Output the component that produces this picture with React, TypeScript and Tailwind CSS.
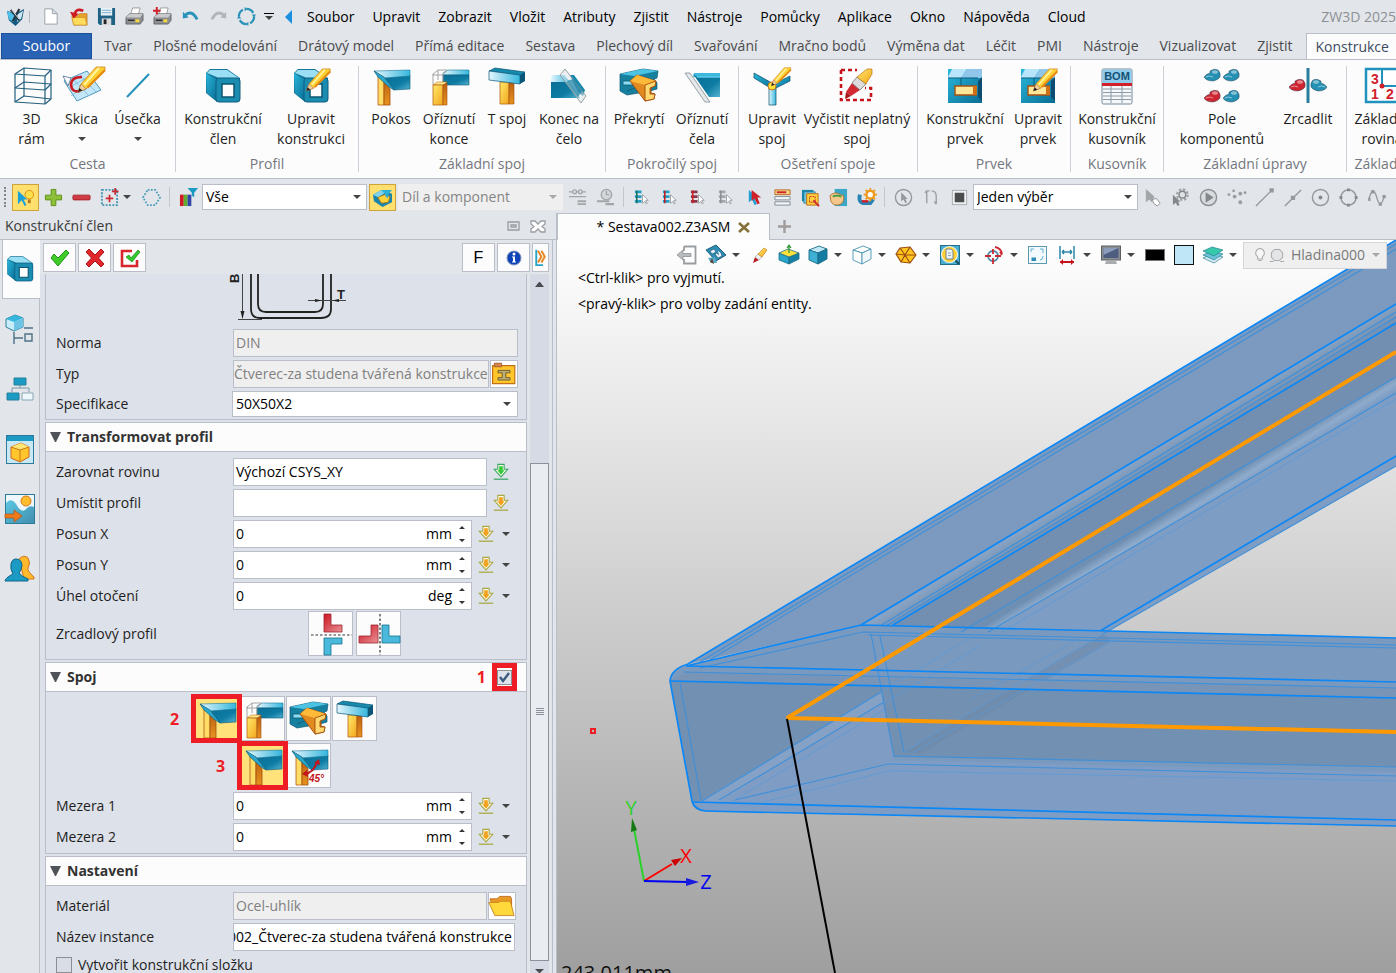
import React from 'react';

const FONT = "font-['Open_Sans','Noto_Sans',sans-serif]";

/* ---------- shared gradients ---------- */

function Gradients() {
    return (
        <svg width="0" height="0" className="absolute" aria-hidden="true">
            <defs>
                <linearGradient id="cyan" x1="0" y1="0" x2="1" y2="1">
                    <stop offset="0" stopColor="#2ab7dc" />
                    <stop offset="1" stopColor="#086c94" />
                </linearGradient>
                <linearGradient id="deep" x1="0" y1="0" x2="1" y2="1">
                    <stop offset="0" stopColor="#0b6f96" />
                    <stop offset="0.6" stopColor="#0d7ba3" />
                    <stop offset="1" stopColor="#55b3d0" />
                </linearGradient>
                <linearGradient id="pale" x1="0" y1="0" x2="1" y2="0">
                    <stop offset="0" stopColor="#e4f6fd" />
                    <stop offset="1" stopColor="#35b6dd" />
                </linearGradient>
                <linearGradient id="gold" x1="0" y1="0" x2="1" y2="1">
                    <stop offset="0" stopColor="#ffe96a" />
                    <stop offset="1" stopColor="#f3a51c" />
                </linearGradient>
                <linearGradient id="rust" x1="0" y1="0" x2="0" y2="1">
                    <stop offset="0" stopColor="#b95f12" />
                    <stop offset="1" stopColor="#e8921f" />
                </linearGradient>
                <linearGradient id="red" x1="0" y1="0" x2="1" y2="1">
                    <stop offset="0" stopColor="#cb1620" />
                    <stop offset="1" stopColor="#e99197" />
                </linearGradient>
            </defs>
        </svg>
    );
}

type IconProps = { name: string; size?: number };

/* ---------- large icons, 40 x 40 ---------- */

const pencil = (
    <g>
        <path d="M13 26 16 18 31 1 40 1 40 4 21 23Z" fill="#ffd034" stroke="#c9761a" strokeWidth="0.7" />
        <path d="M19 19 34 2" stroke="#fff3a0" strokeWidth="2" />
        <path d="M22.500 21.500 40 4" stroke="#e58b12" strokeWidth="2.400" />
        <path d="M13 26 16 18 21 23Z" fill="#f2cfa2" stroke="#9a6a3b" strokeWidth="0.6" />
        <path d="M13 26 14.300 22 17.500 24.600Z" fill="#222" />
    </g>
);

const tube = (
    <g>
        <path d="M3 7 7 3 24 3 37 12 37 33 34 36 14 36 3 27Z" fill="#15769a" />
        <path d="M4 7 7 4 24 4 36 12 16 12Z" fill="#9adff3" />
        <path d="M3 7 14 14 14 35 4 27Z" fill="url(#cyan)" />
        <path d="M16 12h18q3 0 3 3v18q0 3-3 3H16q-3 0-3-3V15q0-3 3-3Z" fill="#1a8cb0" stroke="#0e5f80" />
        <path d="M19 18h12v13H19Z" fill="#fcfcfc" stroke="#0b5573" strokeWidth="1.5" />
    </g>
);

const mitre = (
    <g>
        <path d="M7 10 13 12 13 39 7 39Z" fill="#ffdc66" stroke="#b25c12" strokeWidth="0.8" />
        <path d="M13 13 19 23 19 39 13 39Z" fill="url(#rust)" stroke="#a04e0e" strokeWidth="0.8" />
        <path d="M13 11 39 9 39 23 23 24Z" fill="url(#deep)" stroke="#0c5877" strokeWidth="0.6" />
        <path d="M3 5 39 4 39 10 13 12Z" fill="url(#pale)" stroke="#1b7897" strokeWidth="0.6" />
        <path d="M3 5 13 11 23 24 18 21 7 11Z" fill="#2ba6cb" stroke="#0c5877" strokeWidth="0.6" />
    </g>
);

const feature = (
    <g>
        <path d="M3 3H37V37H3Z" fill="url(#cyan)" />
        <path d="M3 11 7 3H22L16 12H3Z" fill="#b9e5fa" />
        <path d="M16 12 22 3H37V12Z" fill="#8fc6ea" />
        <path d="M33 15 37 11V35L33 31Z" fill="#0d4c71" />
        <path d="M16 12V19M3 12H33" stroke="#0b5c7c" />
        <path d="M10 20H31V29H10Z" fill="#ffe79a" stroke="#a4500f" strokeWidth="1.4" />
        <path d="M28 20H32V29H28Z" fill="#d06f14" />
    </g>
);

const clamp = (x: number, y: number, fill: string) => (
    <g key={x + '-' + y} transform={`translate(${x} ${y})`}>
        <path d="M0 8Q2 5 6 4L6 2Q10-1 14 1Q17 4 16 8Q14 11 9 12Q2 12 0 8Z" fill={fill} stroke="#394b59" strokeWidth="0.5" />
        <ellipse cx="11" cy="3" rx="3" ry="1.8" fill="#fff" opacity="0.45" />
        <path d="M2 8Q5 6 9 8" stroke="#fff" opacity="0.5" fill="none" />
    </g>
);

const large: Record<string, React.ReactNode> = {
    frame: (
        <g fill="none" stroke="#24607f" strokeWidth="1.2" strokeLinejoin="round">
            <path d="M3 8 12 2 39 4 33 10ZM3 22 12 16 39 18 33 24ZM3 36 12 30 39 33 33 38Z" />
            <path d="M3 8V36M12 2V30M39 4V33M33 10V38" />
        </g>
    ),
    sketch: (
        <g>
            <path d="M2 15 25 5 39 24 15 35Z" fill="#c3e7f8" stroke="#5199bc" />
            <path d="M9 30 32 14M6 22 28 10M9 11 27 30M17 8 34 26" stroke="#75b8d9" strokeWidth="0.8" />
            <path d="M1 10 9 12 6 20Z" fill="#fff" stroke="#47708f" strokeWidth="0.8" />
            <path d="M20 11Q9 11 9 19Q10 27 18 25" fill="none" stroke="#ca1c24" strokeWidth="2.6" />
            <g transform="translate(3 0)">{pencil}</g>
        </g>
    ),
    segment: <path d="M9 31 31 8" stroke="#2392bb" strokeWidth="2" />,
    tube,
    tubeEdit: (
        <g>
            {tube}
            <g transform="translate(4 2) scale(.88)">{pencil}</g>
        </g>
    ),
    mitre,
    mitre45: (
        <g>
            {mitre}
            <path d="M15 28Q25 27 28 16" fill="none" stroke="#c4151c" strokeWidth="2" />
            <path d="M25 17 30 13 31 19ZM18 24 13 28 19 31Z" fill="#c4151c" />
            <text x="20" y="36" fontSize="10" fontWeight="700" fontStyle="italic" fill="#c4151c" fontFamily="Liberation Sans, sans-serif">45°</text>
        </g>
    ),
    trimEnd: (
        <g>
            <path d="M14 7 19 4H40V9H14Z" fill="url(#pale)" stroke="#1b7897" strokeWidth="0.6" />
            <path d="M14 9H40V19H14Z" fill="url(#deep)" stroke="#0c5877" strokeWidth="0.6" />
            <path d="M4 8 9 4H18L14 9H4ZM4 8V19M14 8V17M9 4V14" fill="none" stroke="#9a9a9a" strokeWidth="0.9" />
            <path d="M4 19 8 16H18L15 19Z" fill="#ffe88e" stroke="#c3731a" strokeWidth="0.6" />
            <path d="M4 19H14V39H4Z" fill="url(#gold)" stroke="#b9661a" strokeWidth="0.8" />
            <path d="M14 19 18 17V39H14Z" fill="url(#rust)" stroke="#a04e0e" strokeWidth="0.6" />
        </g>
    ),
    tee: (
        <g>
            <path d="M13 16H22V38H13Z" fill="url(#gold)" stroke="#b9661a" strokeWidth="0.8" />
            <path d="M22 16H27V38H22Z" fill="url(#rust)" stroke="#a04e0e" strokeWidth="0.6" />
            <path d="M2 5 8 2 38 6 33 10Z" fill="#1689ac" stroke="#0c5877" strokeWidth="0.7" />
            <path d="M2 5 33 9V18L2 14Z" fill="url(#pale)" stroke="#0c5877" strokeWidth="0.7" />
            <path d="M33 9 38 6V15L33 18Z" fill="#0b5677" />
        </g>
    ),
    endFace: (
        <g>
            <path d="M2 16V11L4 9H15L21 16Z" fill="url(#pale)" />
            <path d="M2 16H19L31 32H2Z" fill="url(#deep)" />
            <path d="M21 9H25L36 24 34 30 29 26Z" fill="#1689ac" />
            <path d="M11 9 16 3 37 30 32 37Z" fill="#d5dfe4" opacity="0.45" />
            <path d="M11 9 16 3 37 30 32 37Z" fill="none" stroke="#8e979c" strokeWidth="0.9" />
            <path d="M18 15 24 13 33 25 29 31Z" fill="#167fa3" opacity="0.7" />
        </g>
    ),
    overlap: (
        <g>
            <path d="M1 8 24 3 39 5 38 12 35 13 38 17 38 23 31 25 8 29 1 25Z" fill="#17809f" stroke="#0c5877" strokeWidth="0.7" />
            <path d="M1 8 24 3 39 5 15 10Z" fill="#4cc3e2" />
            <path d="M4 15 15 15 14 19 4 19ZM8 25 16 22" fill="#8bdcf1" stroke="#0c5877" strokeWidth="0.8" />
            <path d="M11 15 18 9 37 15 36 20 32 21 32 27 36 28 35 33 26 35Z" fill="#e08a20" stroke="#a34c0c" strokeWidth="0.9" />
            <path d="M11 15 18 9 37 15 26 19Z" fill="#ffb938" />
            <path d="M26 19 37 15 36 20 31 22 31 28 36 28 35 33 26 35Z" fill="#ffd96f" stroke="#a34c0c" strokeWidth="0.9" />
        </g>
    ),
    trimFace: (
        <g>
            <path d="M11 11 12 7H38V11Z" fill="#3bb8dc" />
            <path d="M11 8 15 11H38V31H27Z" fill="url(#deep)" />
            <path d="M15 11H38" stroke="#5cc9e8" strokeWidth="1.500" />
            <path d="M3 7H8L28 36H23Z" fill="#e4e8ea" stroke="#8e979c" strokeWidth="0.9" />
        </g>
    ),
    jointEdit: (
        <g>
            <path d="M2 7 20 17 20 23 2 12Z" fill="url(#cyan)" stroke="#0b4d69" strokeWidth="0.7" />
            <path d="M38 10 22 18 22 23 38 15Z" fill="url(#cyan)" stroke="#0b4d69" strokeWidth="0.7" />
            <path d="M17 22H24V39H17Z" fill="url(#pale)" stroke="#0b4d69" strokeWidth="0.7" />
            <circle cx="20" cy="20" r="4" fill="#ffe23c" stroke="#c3731a" />
            <g transform="translate(10 1) scale(.72)">{pencil}</g>
        </g>
    ),
    erase: (
        <g>
            <path d="M4 4H20M4 4V34H34V22H28" fill="none" stroke="#c4151c" strokeWidth="2.6" strokeDasharray="4 3" />
            <path d="M9 26 15 17 23 24 14 30Z" fill="#d22a33" />
            <path d="M15 17 20 11 29 18 23 24Z" fill="#dcdcdc" stroke="#777" strokeWidth="0.8" />
            <path d="M20 11 30 3H35V8L29 18Z" fill="url(#gold)" stroke="#b97716" strokeWidth="0.7" />
            <path d="M9 26 14 30 8 33Z" fill="#a9141b" />
        </g>
    ),
    feature,
    featureEdit: (
        <g>
            {feature}
            <g transform="translate(4 2) scale(.88)">{pencil}</g>
        </g>
    ),
    bom: (
        <g>
            <rect x="5" y="3" width="30" height="35" rx="1.5" fill="#f5f7f9" stroke="#76889a" />
            <path d="M5.500 3.500H34.500V17H5.500Z" fill="#8fcbea" />
            <text x="20" y="14" textAnchor="middle" fontSize="11" fontWeight="700" fill="#155074" fontFamily="Liberation Sans, sans-serif">BOM</text>
            <path d="M5 18.500H35" stroke="#d1202a" strokeWidth="3" />
            <path d="M6 23H34M6 26.500H34M6 30H34M6 33.500H34M14 20V37M25 20V37" stroke="#8d9ba8" strokeWidth="1" />
        </g>
    ),
    pattern: (
        <g>
            {clamp(2, 3, '#2390b4')}
            {clamp(21, 3, '#2390b4')}
            {clamp(2, 24, '#cf2530')}
            {clamp(21, 24, '#2390b4')}
        </g>
    ),
    mirror: (
        <g>
            <path d="M20 2V37" stroke="#2a7e9d" strokeWidth="3" />
            {clamp(1, 13, '#cf2530')}
            <g transform="translate(40 0) scale(-1 1)">{clamp(1, 13, '#2390b4')}</g>
        </g>
    ),
    plane: (
        <g>
            <path d="M4 3H38V36H4Z" fill="#fff" stroke="#1f93bd" strokeWidth="2.5" />
            <path d="M20 4V20H38" fill="none" stroke="#1f93bd" strokeWidth="2" />
            <circle cx="20" cy="20" r="2.500" fill="#d1202a" />
            <g fontSize="14" fontWeight="700" fill="#d1202a" fontFamily="Liberation Sans, sans-serif">
                <text x="9" y="18">3</text>
                <text x="9" y="33">1</text>
                <text x="24" y="33">2</text>
            </g>
        </g>
    ),
    flipV: (
        <g>
            <path d="M13 0H20V11H31V18H13Z" fill="url(#red)" stroke="#9c2530" strokeWidth="0.8" />
            <path d="M13 41V24H31V30H20V41Z" fill="#4bb9db" stroke="#14718f" strokeWidth="0.8" />
            <path d="M0 21H41" stroke="#333" strokeWidth="1.2" strokeDasharray="2.5 2" />
        </g>
    ),
    flipH: (
        <g>
            <path d="M12 11H19V29H0V22H12Z" fill="url(#red)" stroke="#9c2530" strokeWidth="0.8" />
            <path d="M23 11H30V22H41V29H23Z" fill="#4bb9db" stroke="#14718f" strokeWidth="0.8" />
            <path d="M21 0V41" stroke="#333" strokeWidth="1.2" strokeDasharray="2.5 2" />
        </g>
    ),
    treeCube: (
        <g>
            <path d="M6 10 15 6 23 9V18L14 22 6 18Z" fill="#c8ecf9" stroke="#2c7fa1" />
            <path d="M6 10 15 6 23 9 14 13Z" fill="#35b6dd" />
            <path d="M14 13 23 9V18L14 22Z" fill="#6cc3e4" />
            <path d="M24 19H33M14 23V35M14 29H23M25 25H32V32H25Z" fill="none" stroke="#4d7187" strokeWidth="1.4" />
        </g>
    ),
    hierarchy: (
        <g>
            <path d="M20 16V19M12 23V19H29V23" fill="none" stroke="#7b98a8" />
            <path d="M14 9H26V16H14ZM7 24H19V31H7Z" fill="#1b9bc4" stroke="#26809f" />
            <path d="M22 24H33V31H22Z" fill="#eef8fc" stroke="#8aa5b3" />
        </g>
    ),
    windowCube: (
        <g>
            <rect x="6.500" y="6.500" width="27" height="28" fill="#c8e8f5" stroke="#2d7a99" />
            <path d="M7 7H33V12H7Z" fill="#1b9bc4" />
            <path d="M11 18 21 14 29 18V28L20 33 11 29Z" fill="#ffc52c" stroke="#d0661a" />
            <path d="M11 18 21 14 29 18 20 21Z" fill="#ffe676" />
            <path d="M11 18 20 21 29 18M20 21V33" fill="none" stroke="#c97a18" />
        </g>
    ),
    picture: (
        <g>
            <rect x="5.500" y="5.500" width="29" height="29" fill="#eef8fc" stroke="#2d7a99" />
            <path d="M6 14Q11 8 16 15Q22 26 27 19Q30 16 34 18V34H6Z" fill="url(#cyan)" opacity="0.75" />
            <circle cx="26" cy="12" r="5" fill="#ffbc2e" stroke="#da7a1b" />
            <path d="M5 25H14V21L22 27 14 33V29H5Z" fill="#ef7a1c" stroke="#b24e0e" strokeWidth="0.7" />
        </g>
    ),
    people: (
        <g>
            <path d="M19 10Q24 5 28 9Q31 14 28 19Q27 22 34 28L34 30H24Z" fill="#ffb92d" stroke="#d0761a" />
            <path d="M16 10Q22 10 22 17Q21 22 19 24Q21 27 28 30V32H5Q5 29 13 25Q10 20 11 15Q12 10 16 10Z" fill="#1b9bc4" stroke="#0f6688" />
        </g>
    ),
};

function Large({ name, size = 40 }: IconProps) {
    return (
        <svg width={size} height={size} viewBox="0 0 40 40" aria-hidden="true" className="shrink-0 overflow-visible">
            {large[name]}
        </svg>
    );
}

/* ---------- small icons, 20 x 20 ---------- */

const filterRows = (fill: string, mark: string) => (
    <g>
        <path d="M2 4H9M2 9H9M2 14H9" stroke={fill} strokeWidth="3" />
        <path d="M4 3V16" stroke={mark} strokeWidth="1.6" />
        <path d="M10 7V16L12.500 14 14 17 15 16 13.500 13H16Z" fill="#fff" stroke="#8b8f93" strokeWidth="0.8" />
    </g>
);

const cube = (top: string, left: string, right: string, line: string) => (
    <g stroke={line} strokeWidth="0.9" strokeLinejoin="round">
        <path d="M1 5 11 1 19 4 10 8Z" fill={top} />
        <path d="M1 5 10 8V19L1 15Z" fill={left} />
        <path d="M10 8 19 4V14L10 19Z" fill={right} />
    </g>
);

const printer = (
    <g>
        <path d="M6 8 8 1H16L14 8Z" fill="#fff" stroke="#8a8a8a" strokeWidth="0.8" />
        <path d="M1 11 5 7H19V14L16 18H1Z" fill="#8d8f92" stroke="#4a4c4f" strokeWidth="0.7" />
        <path d="M1 11 5 7H19L16 11Z" fill="#c9cbcd" />
        <path d="M3 14H10" stroke="#303030" strokeWidth="1.5" />
        <rect x="11" y="13" width="4" height="3" fill="#f5d93a" />
    </g>
);

const arrowDown = (fill: string, line: string) => (
    <g>
        <path d="M6.500 1.500H13.500V7H17.500L10 15.500 2.500 7H6.500Z" fill="#fdfbe6" stroke={line} strokeWidth="1.2" />
        <path d="M8 3.500H12V8H14L10 13 6 8H8Z" fill={fill} />
        <path d="M2 18H18" stroke={line} strokeWidth="1.4" />
    </g>
);

const pointer = 'M4 2V15L7.500 12 10 18 12.500 17 10 11H14Z';

const small: Record<string, React.ReactNode> = {
    logo: (
        <g>
            <path d="M1 4 10 7 19 2 17 13 10 20 3 14Z" fill="#12597f" />
            <path d="M1 4 9 8 8 16 3 13Z" fill="#4cc0e8" />
            <path d="M12 8 18 4 16 12 12 16Z" fill="#cfeaf5" />
            <path d="M5 3 14 14M14 2 7 15" stroke="#26343e" strokeWidth="2.200" />
            <path d="M6 3 14 13" stroke="#eef6fa" strokeWidth="0.9" />
        </g>
    ),
    page: <path d="M4 2H12L17 7V18H4ZM12 2V7H17" fill="#fff" stroke="#98a0a8" strokeWidth="1" />,
    open: (
        <g>
            <path d="M3 9H9L11 7H19V19H5Z" fill="#e9a22a" stroke="#b97716" strokeWidth="0.7" />
            <path d="M3 11H17L19 19H5Z" fill="#ffdb5c" stroke="#c98b1f" strokeWidth="0.7" />
            <path d="M15 4Q8 1 6 7" fill="none" stroke="#cc1a22" strokeWidth="2.800" />
            <path d="M1 5 10 7 5 12Z" fill="#cc1a22" />
        </g>
    ),
    save: (
        <g>
            <path d="M1 1H19V19H3L1 17Z" fill="#1e6284" />
            <path d="M4 1H16V9H4Z" fill="#e9f3f8" />
            <path d="M5 3.500H15M5 6H15" stroke="#75aecb" />
            <path d="M5 12H15V19H5Z" fill="#d8dadc" />
            <path d="M7 13H10V18H7Z" fill="#222" />
        </g>
    ),
    printer,
    printerPlus: (
        <g>
            {printer}
            <path d="M4 0V8M0 4H8" stroke="#d0202a" strokeWidth="2" />
        </g>
    ),
    undo: (
        <g>
            <path d="M4 9Q11 2 17 13" fill="none" stroke="#2793bb" strokeWidth="3" />
            <path d="M2 5V12L8 11Z" fill="#2793bb" />
        </g>
    ),
    redo: (
        <g>
            <path d="M16 9Q9 2 3 13" fill="none" stroke="#b3b6b9" strokeWidth="3" />
            <path d="M18 5V12L12 11Z" fill="#b3b6b9" />
        </g>
    ),
    cycle: (
        <g>
            <circle cx="10" cy="10" r="8" fill="none" stroke="#2b93b8" strokeWidth="2.400" strokeDasharray="8.500 4" />
            <path d="M8 0 11 2 8 4.500ZM20 8 18 11 15.500 8ZM12 20 9 18 12 15.500ZM0 12 2 9 4.500 12Z" fill="#2b93b8" />
        </g>
    ),
    bulbPointer: (
        <g>
            <path d="M2 3V17L6 13 9 19 11 18 8 12H12Z" fill="#1ca0d8" />
            <circle cx="14" cy="7" r="4.500" fill="#ffe04a" stroke="#d98d12" />
            <path d="M12.500 12H15.500V16H12.500Z" fill="#b7791d" />
        </g>
    ),
    plus: <path d="M7.500 1.500H12.500V7.500H18.500V12.500H12.500V18.500H7.500V12.500H1.500V7.500H7.500Z" fill="#8dbf38" stroke="#5f8f1b" />,
    minus: <rect x="1" y="7.500" width="18" height="5" rx="1" fill="#d23a44" stroke="#a0252d" />,
    dashedPlus: (
        <g>
            <path d="M2 2H18V18H2Z" fill="none" stroke="#4298b5" strokeWidth="2" strokeDasharray="2 1.5" />
            <path d="M10 7V15M6 11H14M16 0V7M12.500 3.500H19.500" stroke="#cc2a33" strokeWidth="1.800" />
        </g>
    ),
    hexDots: <path d="M6 2H14L19 10 14 18H6L1 10Z" fill="none" stroke="#4298b5" strokeWidth="1.800" strokeDasharray="1.800 1.600" />,
    colorFilter: (
        <g>
            <path d="M1 7H5V19H1Z" fill="#cf1c24" />
            <path d="M5 7H9V19H5Z" fill="#5fae2d" />
            <path d="M9 7H13V19H9Z" fill="#3246a8" />
            <path d="M9 0H20L16 5V10L13.500 8V5Z" fill="#1b9bc4" />
        </g>
    ),
    solidFilter: (
        <g>
            <path d="M0 7 9 2 20 6V15L10 20 1 14Z" fill="#1b86ab" />
            <path d="M0 7 9 2 14 4 6 10Z" fill="#7ed3ee" />
            <path d="M5 10 12 7 18 9 16 15 9 16Z" fill="#ffd13a" stroke="#ad6c10" strokeWidth="0.8" />
            <path d="M9 2H20L16 7V11L13 9V7Z" fill="#2eb0d6" />
        </g>
    ),
    ref1: (
        <g stroke="#a3a6a9" fill="none" strokeWidth="1.400">
            <path d="M1 4H19M1 9H19" />
            <circle cx="7" cy="4" r="2" fill="#dfe2e5" />
            <circle cx="13" cy="4" r="2" fill="#dfe2e5" />
            <path d="M10 14H19M10 17H19" strokeWidth="2" />
        </g>
    ),
    ref2: (
        <g stroke="#a3a6a9" fill="#d5d8da" strokeWidth="1.400">
            <circle cx="11" cy="7" r="5.500" />
            <path d="M11 3V7H14" fill="none" />
            <path d="M1 14H14M10 17H19" strokeWidth="2.200" />
        </g>
    ),
    rowsA: filterRows('#27a0c5', '#1a6f5a'),
    rowsB: filterRows('#27a0c5', '#c4151c'),
    rowsC: filterRows('#8a3a4c', '#d0202a'),
    rowsD: filterRows('#a6a9ac', '#8b8f93'),
    redPointer: (
        <g>
            <path d={pointer} fill="#1ca0d8" />
            <path d="M7 2V14L10 11 13 17 15.500 16 13 10H17Z" fill="#d0202a" />
        </g>
    ),
    listRed: (
        <g>
            <path d="M2 2H18V7H2Z" fill="#f6d98b" stroke="#b9661a" />
            <path d="M4 4.500H14" stroke="#d0202a" strokeWidth="2" />
            <path d="M2 9H18V12.500H2ZM2 14.500H18V18H2Z" fill="#f3f5f7" stroke="#808c97" />
        </g>
    ),
    boxSelect: (
        <g>
            <path d="M1 2H13V14H1Z" fill="#1b86ab" />
            <path d="M3 4H15V16H3Z" fill="#6fc5dd" stroke="#15718f" strokeWidth="0.700" />
            <path d="M6 6H18V18H6Z" fill="#ffd13a" stroke="#c36a14" />
            <path d="M9 9H15V15H9Z" fill="none" stroke="#cc2a33" strokeDasharray="2 1" />
            <path d="M13 13 19 19" stroke="#cc2a33" strokeWidth="2" />
        </g>
    ),
    hand: (
        <g>
            <path d="M6 1H19V19H6Z" fill="#3aa7c9" />
            <path d="M1 8Q6 3 12 7L15 8Q17 14 12 17Q5 20 2 14Z" fill="#f4c78a" stroke="#b36c24" strokeWidth="0.9" />
            <path d="M4 9Q8 7 13 9" fill="none" stroke="#3a9c49" strokeWidth="2" />
        </g>
    ),
    gearTube: (
        <g>
            <path d="M3 7Q1 16 8 16H14L17 12" fill="none" stroke="#2a83b5" strokeWidth="4" />
            <path d="M5 14H12" stroke="#d0202a" strokeWidth="2.500" />
            <circle cx="14" cy="7" r="4" fill="#fff" stroke="#ef9a1c" strokeWidth="2.500" />
            <path d="M14 0V3M14 11V14M7 7H10M18 7H21M9 2 11.500 4.500M19 2 16.500 4.500M9 12 11.500 9.500M19 12 16.500 9.500" stroke="#ef9a1c" strokeWidth="1.800" />
        </g>
    ),
    circlePointer: (
        <g>
            <circle cx="10" cy="10" r="8.500" fill="none" stroke="#96999c" strokeWidth="1.500" />
            <path d="M7.500 4.500V14L10 12 12 16 13.500 15 12 11.500H14.500Z" fill="#96999c" />
        </g>
    ),
    angle: <path d="M5 16V3M3 5 5 3 8 3M10 3Q15 3 15 9V17M13 14 15 17" fill="none" stroke="#9a9da0" strokeWidth="1.400" />,
    square: (
        <g>
            <rect x="2.500" y="2.500" width="15" height="15" fill="#f0f1f2" stroke="#a9acb0" />
            <rect x="5" y="5" width="10" height="10" fill="#4a4c4e" />
        </g>
    ),
    greyPointer: (
        <g>
            <path d="M3 1V15L6.500 12 9 15 12 9Z" fill="#a3a6a9" />
            <path d="M10 12 14 11 18 16 15 19 11 16Z" fill="#fff" stroke="#8b8f93" />
        </g>
    ),
    greyGear: (
        <g>
            <circle cx="12" cy="7" r="5.500" fill="none" stroke="#a3a6a9" strokeWidth="2.500" strokeDasharray="2.500 1.800" />
            <circle cx="12" cy="7" r="3.500" fill="#dfe2e5" stroke="#85888b" strokeWidth="1.500" />
            <path d="M2 7V18L5 15.500 7 19 9 18 7.500 14.500H10Z" fill="#85888b" />
        </g>
    ),
    play: (
        <g>
            <circle cx="10" cy="10" r="8.500" fill="#d9dcde" stroke="#8b8f93" strokeWidth="1.500" />
            <path d="M7 4.500 15.500 10 7 15.500Z" fill="#85888b" />
        </g>
    ),
    dots: (
        <g fill="#9a9da0">
            <circle cx="2" cy="7" r="1.500" /><circle cx="7" cy="3" r="1.500" /><circle cx="8" cy="9" r="2" />
            <circle cx="14" cy="6" r="2" /><circle cx="19" cy="5" r="1.500" /><circle cx="14" cy="15" r="2" />
        </g>
    ),
    lineEnd: <path d="M1 19 18 2M16 1H19V4H16Z" fill="#85888b" stroke="#96999c" strokeWidth="1.500" />,
    lineMid: <path d="M2 19 19 2M9 9H12V12H9Z" fill="#85888b" stroke="#96999c" strokeWidth="1.500" />,
    circleDot: (
        <g>
            <circle cx="10" cy="10" r="8.500" fill="none" stroke="#96999c" strokeWidth="1.500" />
            <circle cx="10" cy="10" r="2" fill="#85888b" />
        </g>
    ),
    circleQuads: (
        <g>
            <circle cx="10" cy="10" r="8" fill="none" stroke="#96999c" strokeWidth="1.500" />
            <path d="M8.500 0.500H11.500V3.500H8.500ZM8.500 16.500H11.500V19.500H8.500ZM0.500 8.500H3.500V11.500H0.500ZM16.500 8.500H19.500V11.500H16.500Z" fill="#85888b" />
        </g>
    ),
    spline: (
        <g fill="none" stroke="#96999c" strokeWidth="1.400">
            <path d="M2 12Q6-4 10 9Q14 24 18 9" />
            <path d="M5 3H7V5H5ZM13 16H15V18H13ZM2 11H3V13H2ZM17 8H19V10H17Z" fill="#85888b" />
        </g>
    ),
    exit: (
        <g>
            <path d="M7 1.500H18.500V18.500H7V14M7 6V1.500" fill="none" stroke="#9a9da0" strokeWidth="1.800" />
            <path d="M0 10 6 5V8.500H14V11.500H6V15Z" fill="#b9bcbf" stroke="#85888b" strokeWidth="0.7" />
        </g>
    ),
    plan: (
        <g>
            <path d="M0 5 10 0 20 10 10 16Z" fill="#2d8db5" stroke="#1b5c7b" />
            <path d="M4 6 8 4 10 7 6 9ZM12 5 15 8 16 11 12 13 9 9 11 8 13 10" fill="#e8f4fa" stroke="#174f6a" strokeWidth="0.6" />
            <path d="M2 13 9 12 11 18 5 18Z" fill="#5aa8c8" />
            <path d="M6 13 8 19 4 17Z" fill="#5c4436" />
        </g>
    ),
    eraser: (
        <g>
            <path d="M3 18 5 12 9 15Z" fill="#b8181f" />
            <path d="M5 12 8 9 12 12 9 15Z" fill="#f0f0f0" stroke="#a99" strokeWidth="0.6" />
            <path d="M8 9 14 3 17 5 12 12Z" fill="url(#gold)" stroke="#b97716" strokeWidth="0.6" />
        </g>
    ),
    goldBox: (
        <g stroke="#1b6c86" strokeWidth="0.800" strokeLinejoin="round">
            <path d="M0 8 10 12V19L0 15Z" fill="#2aa5cb" />
            <path d="M10 12 20 8V14L10 19Z" fill="#1681a4" />
            <path d="M0 8 9 4 20 8 10 12Z" fill="#ffe23c" />
            <path d="M10 8V0M8 3 10 0 12 3" fill="none" stroke="#2f9a3b" strokeWidth="1.300" />
        </g>
    ),
    blueCube: cube('#bfe8f6', '#3fb0d5', '#167ba3', '#1b6c86'),
    wireCube: cube('#fff', '#fff', '#f0f8fb', '#4a94b1'),
    hexGold: (
        <g stroke="#9c4c10" strokeWidth="1.200" strokeLinejoin="round">
            <path d="M4 3 14 2 20 10 14 18 5 17 0 9Z" fill="#ffc521" />
            <path d="M4 3 9 10 14 2M9 10 20 10M9 10 14 18M9 10 5 17M9 10 0 9" fill="none" />
        </g>
    ),
    magnify: (
        <g>
            <rect x="0.500" y="0.500" width="19" height="19" fill="#49aece" stroke="#236f8c" />
            <circle cx="9.500" cy="9.500" r="8" fill="#ffd030" stroke="#e8f4f8" strokeWidth="1.200" />
            <path d="M6 4H11L13 6V14H6Z" fill="#eaf3f7" stroke="#6b7a85" strokeWidth="0.9" />
            <path d="M8 8H11M8 10.500H11" stroke="#7e93a0" strokeWidth="0.800" />
            <path d="M15.500 15.500 19 19" stroke="#1c4d63" strokeWidth="2" />
        </g>
    ),
    target: (
        <g fill="none" strokeWidth="1.800">
            <circle cx="9" cy="11" r="5" stroke="#4a86a5" />
            <path d="M9 4V9M9 13V19M1 11H7M11 11H17" stroke="#cc2a33" />
            <path d="M11 2Q17 3 18 9M16 7 18 10" stroke="#cc2a33" />
        </g>
    ),
    fit: (
        <g>
            <rect x="0.500" y="1.500" width="18" height="17" fill="#f2fafd" stroke="#5e97b0" />
            <path d="M3.500 12.500H8V16H3.500Z" fill="#2d8db5" />
            <path d="M3 7V4H6M12 4H15V8M15 11Q15 15 12 15" fill="none" stroke="#5fb2d2" />
        </g>
    ),
    dims: (
        <g>
            <path d="M3 1V14M17 1V14M5 7H15M5 7 7 5M5 7 7 9M15 7 13 5M15 7 13 9" fill="none" stroke="#2b86a8" strokeWidth="1.500" />
            <path d="M3 17H17" stroke="#c4151c" strokeWidth="2" />
            <path d="M3 17 6 14V20ZM17 17 14 14V20Z" fill="#c4151c" />
        </g>
    ),
    monitor: (
        <g>
            <rect x="0.500" y="1" width="19" height="14" fill="#8b8f93" stroke="#5c5f62" />
            <rect x="2.500" y="3" width="15" height="10" fill="#4c5d80" />
            <path d="M2.500 3H17.500L2.500 10Z" fill="#8c9cbb" />
            <path d="M5 16H15L16 19H4Z" fill="#a9acaf" />
        </g>
    ),
    layers: (
        <g stroke="#2d7e93" strokeWidth="0.700">
            <path d="M0 13 9 9 20 12 11 18Z" fill="#d7eef5" />
            <path d="M0 10 9 6 20 9 11 15Z" fill="#6bc2d8" />
            <path d="M0 6 9 2 20 5 11 11Z" fill="#35c9a9" />
        </g>
    ),
    bulb: <path d="M10 2a5.500 5.500 0 0 1 3 10v3H7v-3A5.500 5.500 0 0 1 10 2ZM8 17H12" fill="#f7f7f7" stroke="#a9abad" strokeWidth="1.300" />,
    roundBox: <path d="M7 3H13L17 7V13L13 17H7L3 13V7Z M1 18H6M14 18H19" fill="#e4e5e6" stroke="#a9abad" strokeWidth="1.300" />,
    check: <path d="M1 10 4 6 8 10 16 2 19 5 8 18Z" fill="#3ecb27" stroke="#22931a" />,
    cross: <path d="M4 1 10 7 16 1 19 4 13.500 10 19 16 16 19 10 13 4 19 1 16 6.500 10 1 4Z" fill="#e2272c" stroke="#a8151b" strokeLinejoin="round" />,
    checkBox: (
        <g>
            <path d="M12 3H2V18H17V12" fill="none" stroke="#d8252c" strokeWidth="2.600" />
            <path d="M6 9 9 7 11 10 18 2 20 4 12 14Z" fill="#2fc92d" stroke="#1d8a1b" strokeWidth="0.700" />
        </g>
    ),
    info: (
        <g>
            <circle cx="10" cy="10" r="7" fill="#0e44b8" stroke="#8196ba" />
            <circle cx="10" cy="6" r="1.500" fill="#fff" />
            <path d="M8 8.500H11V13.500H12V14.500H8V13.500H9V9.500H8Z" fill="#fff" />
        </g>
    ),
    flyout: (
        <g fill="none">
            <path d="M5 1V19H13" stroke="#26a5c6" strokeWidth="2.200" />
            <path d="M7 2 11 9 7 16M11 2 15 9 11 16" stroke="#e88a2a" strokeWidth="2.400" />
        </g>
    ),
    pickGreen: arrowDown('#33cc3a', '#3ba666'),
    pickGold: arrowDown('#f2a01c', '#a8a742'),
    folder: (
        <g>
            <path d="M0 4H6L8 2H17L18 4V17H4Z" fill="#e99a26" stroke="#b9661a" strokeWidth="0.700" />
            <path d="M-1 7H7L9 6H17L20 18H4Z" fill="#ffd83c" stroke="#c17c1a" strokeWidth="0.700" />
        </g>
    ),
    beamFolder: (
        <g>
            <path d="M0.500 3H19V18H0.500Z" fill="#ffc62c" stroke="#c2701a" />
            <path d="M2 1H8V4H2Z" fill="#d4854f" stroke="#a1592b" strokeWidth="0.700" />
            <path d="M5 7H15V9H11.500V13H15V15H5V13H8.500V9H5Z" fill="#b9b07a" stroke="#6f5b2d" strokeWidth="0.800" />
        </g>
    ),
};

function Small({ name, size = 20 }: IconProps) {
    return (
        <svg width={size} height={size} viewBox="0 0 20 20" aria-hidden="true" className="shrink-0 overflow-visible">
            {small[name]}
        </svg>
    );
}

function Caret({ faded = false }: { faded?: boolean }) {
    return (
        <svg width="8" height="4" viewBox="0 0 8 4" aria-hidden="true" className="shrink-0">
            <path d="M0 0H8L4 4Z" fill={faded ? '#a5a8ab' : '#444'} />
        </svg>
    );
}

/* ---------- top bars ---------- */

const quickIcons = ['page', 'open', 'save', 'printer', 'printerPlus', 'undo', 'redo', 'cycle'];
const menus = ['Soubor', 'Upravit', 'Zobrazit', 'Vložit', 'Atributy', 'Zjistit', 'Nástroje', 'Pomůcky', 'Aplikace', 'Okno', 'Nápověda', 'Cloud'];

function MenuBar() {
    return (
        <header className="flex h-[33px] shrink-0 items-center overflow-hidden whitespace-nowrap">
            <span className="ml-1.5 flex w-[30px] shrink-0 items-center gap-1">
                <Small name="logo" size={19} />
                <i className="h-3 w-px bg-[#b5b8bb]" />
            </span>
            {quickIcons.map((n) => (
                <button key={n} aria-label={n} className="flex w-7 shrink-0 justify-center">
                    <Small name={n} size={19} />
                </button>
            ))}
            <button aria-label="Přizpůsobit" className="flex w-[18px] shrink-0 flex-col items-center gap-0.5">
                <i className="h-px w-2.5 bg-black" />
                <Caret />
            </button>
            <button aria-label="Zpět" className="ml-1.5 w-[22px] shrink-0">
                <svg width="9" height="14" viewBox="0 0 9 14"><path d="M8 0V14L1 7Z" fill="#1b8fe0" /></svg>
            </button>
            <nav className="flex shrink-0 gap-[18px] pl-px text-black">
                {menus.map((m) => <button key={m}>{m}</button>)}
            </nav>
            <span className="ml-auto shrink-0 pl-4 text-[#8d9195]">ZW3D 2025</span>
        </header>
    );
}

const tabs = ['Tvar', 'Plošné modelování', 'Drátový model', 'Přímá editace', 'Sestava', 'Plechový díl', 'Svařování', 'Mračno bodů', 'Výměna dat', 'Léčit', 'PMI', 'Nástroje', 'Vizualizovat', 'Zjistit'];

function TabBar() {
    return (
        <nav className="flex h-[27px] shrink-0 overflow-hidden border-b border-[#b9bec8] pl-px whitespace-nowrap text-[#4a4b4d]">
            <button className="w-[91px] shrink-0 border border-[#1c4f9e] bg-[#2a62b4] text-white">Soubor</button>
            <div className="flex shrink-0 gap-px pr-1 pl-0.5">
                {tabs.map((t) => <button key={t} className="px-2.5">{t}</button>)}
            </div>
            <button className="-mb-px flex-1 border-t border-l border-[#b9bec8] bg-[#fcfcfc] pl-2 text-left text-[#3c4a63]">Konstrukce</button>
        </nav>
    );
}

type RibbonItem = { icon: string; label: string; width: string; drop?: boolean };

const ribbon: { title: string; width: string; items: RibbonItem[] }[] = [
    { title: 'Cesta', width: 'w-[176px]', items: [
        { icon: 'frame', label: '3D\nrám', width: 'w-12' },
        { icon: 'sketch', label: 'Skica', width: 'w-[52px]', drop: true },
        { icon: 'segment', label: 'Úsečka', width: 'w-[60px]', drop: true },
    ] },
    { title: 'Profil', width: 'w-[183px]', items: [
        { icon: 'tube', label: 'Konstrukční\nčlen', width: 'w-[88px]' },
        { icon: 'tubeEdit', label: 'Upravit\nkonstrukci', width: 'w-[88px]' },
    ] },
    { title: 'Základní spoj', width: 'w-[247px]', items: [
        { icon: 'mitre', label: 'Pokos', width: 'w-[58px]' },
        { icon: 'trimEnd', label: 'Oříznutí\nkonce', width: 'w-[58px]' },
        { icon: 'tee', label: 'T spoj', width: 'w-[58px]' },
        { icon: 'endFace', label: 'Konec na\nčelo', width: 'w-[66px]' },
    ] },
    { title: 'Pokročilý spoj', width: 'w-[133px]', items: [
        { icon: 'overlap', label: 'Překrytí', width: 'w-[60px]' },
        { icon: 'trimFace', label: 'Oříznutí\nčela', width: 'w-[66px]' },
    ] },
    { title: 'Ošetření spoje', width: 'w-[179px]', items: [
        { icon: 'jointEdit', label: 'Upravit\nspoj', width: 'w-[58px]' },
        { icon: 'erase', label: 'Vyčistit neplatný\nspoj', width: 'w-28' },
    ] },
    { title: 'Prvek', width: 'w-[153px]', items: [
        { icon: 'feature', label: 'Konstrukční\nprvek', width: 'w-[88px]' },
        { icon: 'featureEdit', label: 'Upravit\nprvek', width: 'w-[58px]' },
    ] },
    { title: 'Kusovník', width: 'w-[93px]', items: [
        { icon: 'bom', label: 'Konstrukční\nkusovník', width: 'w-[88px]' },
    ] },
    { title: 'Základní úpravy', width: 'w-[183px]', items: [
        { icon: 'pattern', label: 'Pole\nkomponentů', width: 'w-[106px]' },
        { icon: 'mirror', label: 'Zrcadlit', width: 'w-[66px]' },
    ] },
    { title: 'Základní', width: 'w-[71px]', items: [
        { icon: 'plane', label: 'Základní\nrovina', width: 'w-[66px]' },
    ] },
];

function Ribbon() {
    return (
        <section className="flex h-[119px] shrink-0 overflow-hidden border-b border-[#b9bec8] bg-[#fcfcfc] text-[#1e1e1e]">
            {ribbon.map((g) => (
                <div key={g.title} className={`flex shrink-0 flex-col py-1.5 ${g.width}`}>
                    <div className="flex h-full flex-col border-r border-[#cdd0d6]">
                        <div className="flex h-[90px] justify-center">
                            {g.items.map((it) => (
                                <button key={it.label} className={`flex shrink-0 flex-col items-center leading-5 whitespace-pre ${it.width}`}>
                                    <Large name={it.icon} />
                                    <span className="mt-[3px]">{it.label}</span>
                                    {it.drop && <span className="flex h-5 items-center"><Caret /></span>}
                                </button>
                            ))}
                        </div>
                        <div className="text-center leading-4 text-[#74777f]">{g.title}</div>
                    </div>
                </div>
            ))}
        </section>
    );
}

function Tool({ name, active = false }: { name: string; active?: boolean }) {
    return (
        <button
            aria-label={name}
            className={active
                ? 'flex h-[27px] w-[27px] shrink-0 items-center justify-center border border-[#cfa33c] bg-[#ffe06e]'
                : 'flex h-[27px] w-7 shrink-0 items-center justify-center'}
        >
            <Small name={name} size={19} />
        </button>
    );
}

function Combo({ label, value, disabled = false }: { label: string; value: string; disabled?: boolean }) {
    return (
        <span className="relative flex w-[165px] shrink-0 items-center">
            <select
                aria-label={label}
                disabled={disabled}
                className={disabled
                    ? 'h-[26px] w-full appearance-none bg-[#efefef] px-1 text-[#858585]'
                    : 'h-[26px] w-full appearance-none border border-[#b9bec8] bg-white px-[3px] text-black'}
            >
                <option>{value}</option>
            </select>
            <span className="pointer-events-none absolute right-1.5"><Caret faded={disabled} /></span>
        </span>
    );
}

const Divider = () => <i className="mx-1 h-5 w-px shrink-0 bg-[#c3c6ca]" />;

function SelectionBar() {
    return (
        <section className="flex h-9 shrink-0 items-center overflow-hidden pl-1">
            <i className="mr-1.5 h-5 shrink-0 border-l-2 border-dotted border-[#7f858f]" />
            <Tool name="bulbPointer" active />
            <Tool name="plus" />
            <Tool name="minus" />
            <Tool name="dashedPlus" />
            <Caret />
            <span className="pl-1.5"><Tool name="hexDots" /></span>
            <Divider />
            <Tool name="colorFilter" />
            <Combo label="Filtr" value="Vše" />
            <span className="mx-0.5"><Tool name="solidFilter" active /></span>
            <Combo label="Rozsah" value="Díl a komponent" disabled />
            <Tool name="ref1" />
            <Tool name="ref2" />
            <Divider />
            {['rowsA', 'rowsB', 'rowsC', 'rowsD', 'redPointer', 'listRed', 'boxSelect', 'hand', 'gearTube'].map((n) => <Tool key={n} name={n} />)}
            <Divider />
            {['circlePointer', 'angle', 'square'].map((n) => <Tool key={n} name={n} />)}
            <Combo label="Výběr" value="Jeden výběr" />
            {['greyPointer', 'greyGear', 'play', 'dots', 'lineEnd', 'lineMid', 'circleDot', 'circleQuads', 'spline'].map((n) => <Tool key={n} name={n} />)}
        </section>
    );
}

/* ---------- left panel ---------- */

const sideTabs = ['tube', 'treeCube', 'hierarchy', 'windowCube', 'picture', 'people'];

function SideTabs() {
    return (
        <div className="flex w-10 shrink-0 flex-col">
            {sideTabs.map((n, i) => (
                <button
                    key={n}
                    aria-label={n}
                    className={i === 0
                        ? 'ml-0.5 flex h-[59px] items-center border-b border-l border-[#b9bec8] bg-[#fcfcfc] pl-0.5'
                        : 'flex h-[60px] items-center justify-center border-r border-[#b9bec8]'}
                >
                    <Large name={n} size={i === 0 ? 30 : 40} />
                </button>
            ))}
            <div className="flex-1 border-r border-[#b9bec8]" />
        </div>
    );
}

function ActionButton({ label, narrow = false, children }: { label: string; narrow?: boolean; children: React.ReactNode }) {
    return (
        <button
            aria-label={label}
            className={narrow
                ? 'flex h-[29px] w-[17px] items-center justify-center border border-[#b9bec8] bg-[#fcfcfc]'
                : "flex h-[29px] w-[33px] items-center justify-center border border-[#b9bec8] bg-[#fcfcfc] font-['Liberation_Sans',sans-serif] text-base text-black"}
        >
            {children}
        </button>
    );
}

function Section({ title, extra, children }: { title: string; extra?: React.ReactNode; children: React.ReactNode }) {
    return (
        <section className="mt-0.5 border border-[#b9bec8]">
            <div className="flex h-[29px] items-center border-b border-[#b9bec8] bg-[#fcfcfc] pl-1">
                <svg width="11" height="10" viewBox="0 0 11 10" aria-hidden="true"><path d="M0 0H11L6 10H5Z" fill="#4f5258" /></svg>
                <h2 className="ml-1.5 font-bold text-[#333]">{title}</h2>
                {extra}
            </div>
            {children}
        </section>
    );
}

const fieldBox = 'h-7 border border-[#b9bec8] px-0.5 text-black';

function Row({ id, label, children }: { id?: string; label: string; children: React.ReactNode }) {
    return (
        <div className="flex h-[31px] items-center pl-2.5">
            <label htmlFor={id} className="w-[177px] shrink-0 text-[#1e1e1e]">{label}</label>
            {children}
        </div>
    );
}

function SpinRow({ id, label, unit }: { id: string; label: string; unit: string }) {
    return (
        <Row id={id} label={label}>
            <div className="flex h-7 w-[239px] items-center border border-[#b9bec8] bg-white text-black">
                <input id={id} defaultValue="0" className="min-w-0 flex-1 px-0.5 outline-none" />
                <span>{unit}</span>
                <svg width="19" height="18" viewBox="0 0 19 18" aria-hidden="true">
                    <path d="M7 4H13L10 1ZM7 14H13L10 17Z" fill="#333" />
                </svg>
            </div>
            <button type="button" aria-label="Vybrat" className="ml-[5px]"><Small name="pickGold" size={18} /></button>
            <span className="ml-[7px]"><Caret /></span>
        </Row>
    );
}

function JointButton({ name, active = false, mark }: { name: string; active?: boolean; mark?: string }) {
    return (
        <button
            type="button"
            aria-label={name}
            className={active
                ? 'relative flex h-[45px] w-[45px] items-center justify-center bg-[#ffe27a]'
                : 'relative flex h-[45px] w-[45px] items-center justify-center border border-[#b9bec8] bg-[#fcfcfc]'}
        >
            <Large name={name} />
            {mark && (
                <>
                    <i className="absolute -inset-x-[3px] -inset-y-0.5 z-10 border-5 border-[#ee1c25]" />
                    <b className="absolute -left-6 text-base text-[#ee1c25]">{mark}</b>
                </>
            )}
        </button>
    );
}

function ProfileSketch() {
    return (
        <svg width="130" height="53" viewBox="225 274 130 53" className="ml-[179px] shrink-0" aria-hidden="true">
            <g fill="none" stroke="#222" strokeWidth="1.800">
                <path d="M251 274V309Q251 318 260 318H321Q331 318 331 309V274" />
                <path d="M258 274V304Q258 312 266 312H315Q323 312 323 304V274" />
            </g>
            <path d="M242.500 274V318M238 319.500H262M308 300.500H346" stroke="#444" />
            <path d="M240.500 311H244.500L242.500 319ZM315 299V302L322 300.500ZM339 299V302L332 300.500Z" fill="#222" />
            <text x="337" y="299" fontSize="13" fontFamily="Liberation Sans, sans-serif" fill="#222" fontWeight="700">T</text>
            <text transform="translate(239 283) rotate(-90)" fontSize="13" fontFamily="Liberation Sans, sans-serif" fill="#222" fontWeight="700">B</text>
        </svg>
    );
}

function Form() {
    return (
        <form className="ml-[5px] w-[482px] shrink-0">
            <section className="border border-t-0 border-[#b9bec8] pb-px">
                <ProfileSketch />
                <Row id="norma" label="Norma">
                    <input id="norma" disabled defaultValue="DIN" className="h-7 w-[285px] border border-[#b9bec8] bg-[#efefef] px-0.5 text-[#808080]" />
                </Row>
                <Row id="typ" label="Typ">
                    <input id="typ" disabled defaultValue="Čtverec-za studena tvářená konstrukce" className="h-7 w-[256px] border border-[#b9bec8] bg-[#efefef] text-[#808080]" />
                    <button type="button" aria-label="Vybrat typ" className="ml-px flex h-7 w-7 items-center justify-center border border-[#b9bec8] bg-white">
                        <Small name="beamFolder" size={24} />
                    </button>
                </Row>
                <div className="flex h-[29px] items-center pl-2.5">
                    <label htmlFor="spec" className="w-44 shrink-0 text-[#1e1e1e]">Specifikace</label>
                    <span className="relative flex w-[286px] items-center">
                        <select id="spec" className="h-[26px] w-full appearance-none border border-[#b9bec8] bg-white px-[3px] text-black">
                            <option>50X50X2</option>
                        </select>
                        <span className="pointer-events-none absolute right-[7px]"><Caret /></span>
                    </span>
                </div>
            </section>

            <Section title="Transformovat profil">
                <div className="pt-1 pb-[3px]">
                    <Row id="rovina" label="Zarovnat rovinu">
                        <input id="rovina" defaultValue="Výchozí CSYS_XY" className={`${fieldBox} w-[254px] bg-white`} />
                        <button type="button" aria-label="Vybrat" className="ml-[5px]"><Small name="pickGreen" size={18} /></button>
                    </Row>
                    <Row id="umistit" label="Umístit profil">
                        <input id="umistit" className={`${fieldBox} w-[254px] bg-white`} />
                        <button type="button" aria-label="Vybrat" className="ml-[5px]"><Small name="pickGold" size={18} /></button>
                    </Row>
                    <SpinRow id="posun-x" label="Posun X" unit="mm" />
                    <SpinRow id="posun-y" label="Posun Y" unit="mm" />
                    <SpinRow id="uhel" label="Úhel otočení" unit="deg" />
                    <div className="flex h-[45px] items-center pl-2.5">
                        <span className="w-[252px] text-[#1e1e1e]">Zrcadlový profil</span>
                        <div className="flex gap-[3px]">
                            <JointButton name="flipV" />
                            <JointButton name="flipH" />
                        </div>
                    </div>
                </div>
            </Section>

            <Section
                title="Spoj"
                extra={
                    <span className="ml-auto flex items-center">
                        <b className="mr-1.5 text-base text-[#ee1c25]">1</b>
                        <span className="relative mr-[9px] flex h-7 w-[25px] items-center justify-center border-5 border-[#ee1c25]">
                            <input type="checkbox" defaultChecked aria-label="Spoj" className="h-[15px] w-[15px] appearance-none border border-[#8c8f94] bg-[#dfe3ea]" />
                            <svg width="15" height="15" viewBox="0 0 15 15" className="pointer-events-none absolute" aria-hidden="true">
                                <path d="M3 7 6 11 12 3" fill="none" stroke="#3d5a80" strokeWidth="2.400" />
                            </svg>
                        </span>
                    </span>
                }
            >
                <div className="pt-1 pb-px">
                    <div className="flex gap-px pl-[148px]">
                        <JointButton name="mitre" active mark="2" />
                        <JointButton name="trimEnd" />
                        <JointButton name="overlap" />
                        <JointButton name="tee" />
                    </div>
                    <div className="mt-0.5 mb-0.5 flex gap-px pl-[194px]">
                        <JointButton name="mitre" active mark="3" />
                        <JointButton name="mitre45" />
                    </div>
                    <SpinRow id="mezera-1" label="Mezera 1" unit="mm" />
                    <SpinRow id="mezera-2" label="Mezera 2" unit="mm" />
                </div>
            </Section>

            <Section title="Nastavení">
                <div className="pt-1">
                    <Row id="material" label="Materiál">
                        <input id="material" disabled defaultValue="Ocel-uhlík" className="h-7 w-[254px] border border-[#b9bec8] bg-[#efefef] px-0.5 text-[#808080]" />
                        <button type="button" aria-label="Vybrat materiál" className="ml-px flex h-7 w-7 items-center justify-center border border-[#b9bec8] bg-white">
                            <Small name="folder" size={24} />
                        </button>
                    </Row>
                    <Row id="nazev" label="Název instance">
                        <input
                            id="nazev"
                            defaultValue="002_Čtverec-za studena tvářená konstrukce"
                            ref={(el) => { if (el) el.scrollLeft = el.scrollWidth; }}
                            className="h-7 w-[282px] border border-[#b9bec8] bg-white pr-0.5 text-black"
                        />
                    </Row>
                    <label className="flex h-[26px] items-center gap-1.5 pl-2.5 text-[#1e1e1e]">
                        <input type="checkbox" className="h-4 w-4 appearance-none border border-[#8c8f94] bg-[#d9dee6]" />
                        Vytvořit konstrukční složku
                    </label>
                </div>
            </Section>
        </form>
    );
}

function LeftPanel() {
    return (
        <aside className="flex w-[557px] shrink-0 flex-col border-r border-[#b9bec8]">
            <div className="flex h-[27px] shrink-0 items-center border-b border-[#b9bec8] pl-[5px]">
                <h1 className="text-[#3a3a3a]">Konstrukční člen</h1>
                <button aria-label="Maximalizovat" className="ml-auto">
                    <svg width="13" height="10" viewBox="0 0 13 10"><path d="M1 1H12V9H1ZM4 4H9V6H4Z" fill="none" stroke="#999da1" strokeWidth="1.300" /></svg>
                </button>
                <button aria-label="Zavřít" className="mx-2.5">
                    <svg width="16" height="13" viewBox="0 0 16 13"><path d="M1 1H5L8 4 11 1H15V4L12 6.500 15 9V12H11L8 9 5 12H1V9L4 6.500 1 4V1Z" fill="#fff" stroke="#999da1" strokeWidth="1.300" /></svg>
                </button>
            </div>
            <div className="flex min-h-0 flex-1">
                <SideTabs />
                <div className="mr-[3px] flex min-w-0 flex-1 flex-col border-r border-[#b9bec8]">
                    <div className="flex h-[34px] shrink-0 items-start gap-0.5 px-[3px] pt-[3px]">
                        <ActionButton label="OK"><Small name="check" /></ActionButton>
                        <ActionButton label="Zrušit"><Small name="cross" /></ActionButton>
                        <ActionButton label="Použít"><Small name="checkBox" /></ActionButton>
                        <span className="flex-1" />
                        <ActionButton label="F">F</ActionButton>
                        <ActionButton label="Informace"><Small name="info" /></ActionButton>
                        <ActionButton label="Vysunout" narrow><Small name="flyout" size={17} /></ActionButton>
                    </div>
                    <div className="flex min-h-0 flex-1 overflow-hidden">
                        <div className="flex bg-[#dde1e9]"><Form /></div>
                        <div className="ml-[3px] flex w-[19px] shrink-0 flex-col items-center bg-[#d5dae4]">
                            <svg width="9" height="5" viewBox="0 0 9 5" className="mt-2 mb-44 shrink-0"><path d="M0 5H9L5 0H4Z" fill="#4a4c50" /></svg>
                            <div className="flex w-full flex-1 items-center justify-center border border-[#8b9099] bg-[#e9edf2]">
                                <svg width="8" height="8" viewBox="0 0 8 8"><path d="M0 0.500H8M0 2.500H8M0 4.500H8M0 6.500H8" stroke="#8b9099" /></svg>
                            </div>
                            <svg width="9" height="12" viewBox="0 0 9 12" className="shrink-0"><path d="M0 8H9L5 12H4Z" fill="#4a4c50" /></svg>
                        </div>
                    </div>
                </div>
            </div>
        </aside>
    );
}

/* ---------- viewport ---------- */

function Model() {
    return (
        <svg viewBox="557 240 839 733" preserveAspectRatio="xMinYMin slice" className="absolute inset-0 h-full w-full" aria-hidden="true">
            <defs>
                <linearGradient id="sheen" gradientUnits="userSpaceOnUse" x1="1186" y1="502" x2="1194" y2="515">
                    <stop offset="0" stopColor="#6f8fb2" />
                    <stop offset="0.55" stopColor="#8fabcc" />
                    <stop offset="1" stopColor="#7e9dc4" />
                </linearGradient>
                <linearGradient id="edge" gradientUnits="userSpaceOnUse" x1="1128" y1="466" x2="1139" y2="484">
                    <stop offset="0" stopColor="#87a2c2" />
                    <stop offset="1" stopColor="#6d8bae" />
                </linearGradient>
            </defs>
            {/* diagonal beam */}
            <path d="M688 664 1396 240V304L861 625Z" fill="#7c9abf" />
            <path d="M861 625 1396 304V384L976 632Z" fill="#728fb1" />
            <path d="M861 625 1396 304V323L893 625Z" fill="url(#edge)" />
            <path d="M961 632 1396 382V466L1103 634Z" fill="#7e9dc4" />
            <path d="M961 632 1396 377V393L988 632Z" fill="url(#sheen)" />
            {/* horizontal beam */}
            <path d="M670 681Q671 668 688 665L861 625 1396 638V826L705 811Q694 810 692 803Z" fill="#7a99be" />
            <path d="M671 681 1396 698V767L894 757 881 692 701 801 692 801Z" fill="#7290b2" />
            <path d="M701 801 881 692 894 760Z" fill="#7f9dc4" />
            <path d="M692 803 894 760 1396 772V826L705 811Z" fill="#7f9dc4" />
            <path d="M702 801 881 692 883 702 719 802Z" fill="#8ba6c6" opacity="0.5" />
            <path d="M1103 634 904 752 920 754 1112 641Z" fill="#6b88a8" opacity="0.5" />
            <path d="M686 672 1396 688V698L671 681Z" fill="#7895b8" />

            <g fill="none" stroke="#4190d8" strokeWidth="1.200">
                <path d="M700 662 1396 244M708 661 1396 249M880 626 1396 312M886 626 1396 317M863 632 1396 645M868 635 1396 648M684 672 1396 688M700 668 863 632" />
                <path d="M702 801 881 692M719 800 884 702M961 632 1396 377M988 632 1396 393M735 800 888 764" />
                <path d="M680 683 701 800M871 634 894 757M880 636 904 752" />
                <path d="M894 756 1396 767M888 764 1396 776M1103 634 1396 466" />
            </g>
            <g fill="none" stroke="#5b9ad8" strokeWidth="1" opacity="0.75">
                <path d="M733 801 885 709M1002 632 1396 399M763 802 893 770M893 771 1396 781M904 752 1103 634M910 754 1113 640M970 700 1080 638M881 692 976 634M884 703 980 646" />
            </g>
            <g fill="none" stroke="#0b87f6" strokeWidth="1.700">
                <path d="M688 664 1396 240M861 625 1396 304M893 625 1396 323" />
                <path d="M1100 631 1396 456M861 625 1396 638M686 666 861 625M686 666 1396 682M671 681 1396 698" />
                <path d="M692 802 1396 820M705 811 1396 826" />
                <path d="M688 664Q671 669 670 681L692 801Q694 810 706 811" />
            </g>

            <path d="M1396 352 787 718 1396 732" fill="none" stroke="#ff9900" strokeWidth="4" strokeLinejoin="bevel" />
            <path d="M787 719 835 973" stroke="#000" strokeWidth="2" />
            <rect x="591" y="729" width="4" height="4" fill="none" stroke="#ee1c25" strokeWidth="2" />

            {/* axis triad */}
            <path d="M644 881 634 829" stroke="#2bd12b" strokeWidth="2" />
            <path d="M632 818 637 830 631 832Z" fill="#157a15" />
            <path d="M644 881 672 864" stroke="#f00" strokeWidth="2" />
            <path d="M682 858 675 866 671 860Z" fill="#c00" />
            <path d="M644 881 688 882" stroke="#0000f0" strokeWidth="2" />
            <path d="M686 878 699 882 686 886Z" fill="#1a1ae0" />
            <g fontSize="20" fontFamily="Open Sans, sans-serif" textAnchor="middle">
                <text x="631" y="815" fill="#2bd12b">Y</text>
                <text x="686" y="863" fill="#f00">X</text>
                <text x="706" y="889" fill="#0000f0">Z</text>
            </g>
            <text x="561" y="980" fontSize="20" fontFamily="Open Sans, sans-serif" fill="#111">243.011mm</text>
        </svg>
    );
}

const viewTools: { name: string; drop?: boolean }[] = [
    { name: 'exit' },
    { name: 'plan', drop: true },
    { name: 'eraser' },
    { name: 'goldBox' },
    { name: 'blueCube', drop: true },
    { name: 'wireCube', drop: true },
    { name: 'hexGold', drop: true },
    { name: 'magnify', drop: true },
    { name: 'target', drop: true },
    { name: 'fit' },
    { name: 'dims', drop: true },
    { name: 'monitor', drop: true },
];

function ViewTool({ name, drop }: { name: string; drop?: boolean }) {
    return (
        <span className={drop ? 'mr-1 flex shrink-0 items-center' : 'flex shrink-0 items-center'}>
            <button aria-label={name} className="flex w-7 justify-center"><Small name={name} /></button>
            {drop && <span className="flex w-[11px] justify-center"><Caret /></span>}
        </span>
    );
}

function Viewport() {
    return (
        <main className="flex min-w-0 flex-1 flex-col">
            <div className="flex h-[27px] shrink-0 items-stretch border-b border-[#b9bec8]">
                <button className="-mb-px flex w-[213px] items-center justify-center gap-2 border border-b-0 border-[#b9bec8] bg-[#fcfcfc] pl-5 text-black">
                    * Sestava002.Z3ASM
                    <svg width="12" height="11" viewBox="0 0 12 11" aria-hidden="true"><path d="M1 1 11 10M11 1 1 10" stroke="#83703a" strokeWidth="2.600" /></svg>
                </button>
                <button aria-label="Nová záložka" className="ml-2">
                    <svg width="13" height="13" viewBox="0 0 13 13"><path d="M6.500 0V13M0 6.500H13" stroke="#a09c9c" strokeWidth="2.400" /></svg>
                </button>
            </div>
            <div className="relative flex-1 overflow-hidden bg-linear-to-b from-white to-[#9f9f9f]">
                <Model />
                <div className="relative flex h-[30px] items-center gap-px overflow-hidden pl-[116px]">
                    {viewTools.map((t) => <ViewTool key={t.name} {...t} />)}
                    <button aria-label="Barva" className="mx-1 h-3 w-5 shrink-0 border border-[#777] bg-black" />
                    <button aria-label="Výplň" className="mx-1 h-5 w-5 shrink-0 border border-[#111] bg-[#bfe6f7]" />
                    <ViewTool name="layers" drop />
                    <span className="relative flex h-[27px] w-36 shrink-0 items-center border border-[#d3d5d8] bg-[#efefef]">
                        <span className="pointer-events-none absolute left-2 flex gap-px"><Small name="bulb" size={16} /><Small name="roundBox" size={16} /></span>
                        <select aria-label="Hladina" disabled className="h-full w-full appearance-none pl-[47px] text-[#7a7a7a]">
                            <option>Hladina000</option>
                        </select>
                        <span className="pointer-events-none absolute right-1.5"><Caret faded /></span>
                    </span>
                </div>
                <div className="relative -mt-[5px] pl-[21px] leading-[26px] text-black">
                    <p>&lt;Ctrl-klik&gt; pro vyjmutí.</p>
                    <p>&lt;pravý-klik&gt; pro volby zadání entity.</p>
                </div>
            </div>
        </main>
    );
}

export default function App() {
    return (
        <div className={`flex h-screen flex-col overflow-hidden bg-[#e2e5e9] text-sm ${FONT}`}>
            <Gradients />
            <MenuBar />
            <TabBar />
            <Ribbon />
            <SelectionBar />
            <div className="-mt-0.5 flex min-h-0 flex-1">
                <LeftPanel />
                <Viewport />
            </div>
        </div>
    );
}
